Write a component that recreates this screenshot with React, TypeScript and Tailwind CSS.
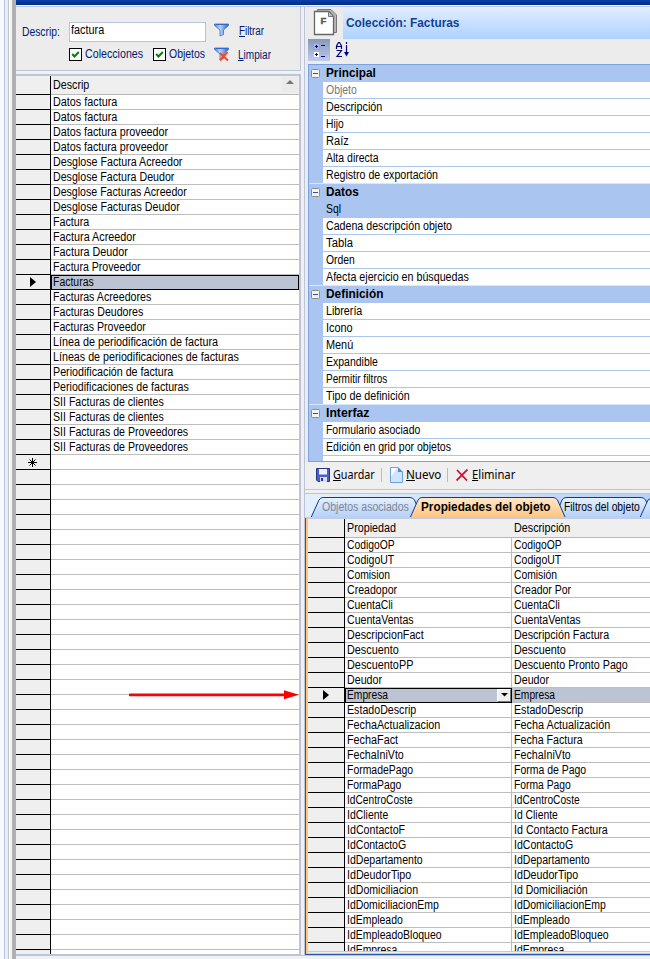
import { useLayoutEffect, useRef, useState } from "react";
import type { ReactNode } from "react";

type Pair = [string, number];

/* A label condensed horizontally so that it takes exactly `w` pixels. */
function Label({ w, children, className = "" }: { w: number; children: ReactNode; className?: string }) {
  const ref = useRef<HTMLSpanElement>(null);
  const [scale, setScale] = useState(1);
  useLayoutEffect(() => {
    if (ref.current) setScale(w / ref.current.offsetWidth);
  }, [w]);
  return (
    <span className={`block shrink-0 whitespace-nowrap ${className}`} style={{ width: w }}>
      <span ref={ref} className="inline-block origin-left" style={{ transform: `scaleX(${scale})` }}>
        {children}
      </span>
    </span>
  );
}

const collections: Pair[] = [
  ["Datos factura", 64],
  ["Datos factura", 64],
  ["Datos factura proveedor", 115],
  ["Datos factura proveedor", 115],
  ["Desglose Factura Acreedor", 129],
  ["Desglose Factura Deudor", 121],
  ["Desglose Facturas Acreedor", 134],
  ["Desglose Facturas Deudor", 127],
  ["Factura", 36],
  ["Factura Acreedor", 83],
  ["Factura Deudor", 75],
  ["Factura Proveedor", 88],
  ["Facturas", 41],
  ["Facturas Acreedores", 98],
  ["Facturas Deudores", 90],
  ["Facturas Proveedor", 93],
  ["Línea de periodificación de factura", 165],
  ["Líneas de periodificaciones de facturas", 186],
  ["Periodificación de factura", 120],
  ["Periodificaciones de facturas", 136],
  ["SII Facturas de clientes", 111],
  ["SII Facturas de clientes", 111],
  ["SII Facturas de Proveedores", 135],
  ["SII Facturas de Proveedores", 135],
];
const SELECTED_COLLECTION = 12;

const groups: { title: Pair; items: Pair[] }[] = [
  {
    title: ["Principal", 50],
    items: [["Objeto", 31], ["Descripción", 56], ["Hijo", 18], ["Raíz", 23], ["Alta directa", 53], ["Registro de exportación", 112]],
  },
  {
    title: ["Datos", 33],
    items: [["Sql", 15], ["Cadena descripción objeto", 126], ["Tabla", 27], ["Orden", 29], ["Afecta ejercicio en búsquedas", 143]],
  },
  {
    title: ["Definición", 57],
    items: [["Librería", 36], ["Icono", 27], ["Menú", 27], ["Expandible", 52], ["Permitir filtros", 61], ["Tipo de definición", 84]],
  },
  { title: ["Interfaz", 43], items: [["Formulario asociado", 94], ["Edición en grid por objetos", 125]] },
];

const properties: [string, number, string, number][] = [
  ["CodigoOP", 48, "CodigoOP", 48],
  ["CodigoUT", 47, "CodigoUT", 47],
  ["Comision", 43, "Comisión", 43],
  ["Creadopor", 50, "Creador Por", 57],
  ["CuentaCli", 46, "CuentaCli", 46],
  ["CuentaVentas", 67, "CuentaVentas", 67],
  ["DescripcionFact", 77, "Descripción Factura", 95],
  ["Descuento", 52, "Descuento", 52],
  ["DescuentoPP", 66, "Descuento Pronto Pago", 114],
  ["Deudor", 35, "Deudor", 35],
  ["Empresa", 41, "Empresa", 41],
  ["EstadoDescrip", 69, "EstadoDescrip", 69],
  ["FechaActualizacion", 93, "Fecha Actualización", 96],
  ["FechaFact", 51, "Fecha Factura", 69],
  ["FechaIniVto", 57, "FechaIniVto", 57],
  ["FormadePago", 66, "Forma de Pago", 72],
  ["FormaPago", 54, "Forma Pago", 57],
  ["IdCentroCoste", 66, "IdCentroCoste", 66],
  ["IdCliente", 41, "Id Cliente", 44],
  ["IdContactoF", 58, "Id Contacto Factura", 94],
  ["IdContactoG", 59, "IdContactoG", 59],
  ["IdDepartamento", 76, "IdDepartamento", 76],
  ["IdDeudorTipo", 64, "IdDeudorTipo", 64],
  ["IdDomiciliacion", 71, "Id Domiciliación", 74],
  ["IdDomiciliacionEmp", 92, "IdDomiciliacionEmp", 92],
  ["IdEmpleado", 56, "IdEmpleado", 56],
  ["IdEmpleadoBloqueo", 95, "IdEmpleadoBloqueo", 95],
  ["IdEmpresa", 50, "IdEmpresa", 50],
];
const SELECTED_PROPERTY = 10;

function Funnel({ clear = false }: { clear?: boolean }) {
  return (
    <svg width="16" height="15" viewBox="0 0 16 15" className="block shrink-0">
      <defs>
        <linearGradient id="funnel" x1="0" x2="1">
          <stop offset="0" stopColor="#4c80e0" />
          <stop offset=".4" stopColor="#b9d6fb" />
          <stop offset="1" stopColor="#2a5ccc" />
        </linearGradient>
      </defs>
      <path d="M.5 1H14.500V2.500L9.500 7V11.500L6 13V7L.5 2.500Z" fill="url(#funnel)" stroke="#3c6fd6" strokeWidth=".8" />
      <path d="M1.500 1.500H13.500" stroke="#3468d0" />
      {clear && <path d="M6 6L14 13.500M13.500 5L6 13.500" stroke="#f04a28" strokeWidth="2" />}
    </svg>
  );
}

function Check({ w, children }: { w: number; children: string }) {
  return (
    <div className="flex items-center gap-[3px]">
      <svg width="13" height="13" viewBox="0 0 13 13" className="block">
        <rect x=".5" y=".5" width="12" height="12" fill="#fff" stroke="#000" />
        <path d="M3.200 6L5.500 8.500L9.800 4" fill="none" stroke="#008000" strokeWidth="2" />
      </svg>
      <Label w={w}>{children}</Label>
    </div>
  );
}

function SearchPanel() {
  return (
    <div className="flex h-[64px] w-[285px] flex-col border-r border-b border-[#bcc4d8] bg-[#ececec] pl-[6px] text-[#001a72]">
      <div className="mt-[15px] flex h-[20px] items-center">
        <Label w={38}>Descrip:</Label>
        <div className="ml-[9px] flex h-[20px] w-[137px] items-start border border-[#b9c2d8] bg-white pl-px leading-[14px] text-black">
          <Label w={33}>factura</Label>
        </div>
        <div className="mb-[3px] ml-[8px]"><Funnel /></div>
        <Label w={25} className="mb-[2px] ml-[9px]"><u>F</u>iltrar</Label>
      </div>
      <div className="mt-[3px] flex h-[18px] items-center pl-[47px]">
        <Check w={58}>Colecciones</Check>
        <div className="ml-[10px]"><Check w={36}>Objetos</Check></div>
        <div className="ml-[9px]"><Funnel clear /></div>
        <Label w={33} className="mt-[2px] ml-[8px]"><u>L</u>impiar</Label>
      </div>
    </div>
  );
}

function RowArrow() {
  return (
    <svg width="6" height="10" viewBox="0 0 6 10" className="block">
      <path d="M0 0L6 5L0 10Z" fill="#000" />
    </svg>
  );
}

function CollectionGrid() {
  return (
    <div className="mt-[3px] flex h-[882px] w-[285px] flex-col overflow-hidden border-t-2 border-r-2 border-b border-[#bcc4d8] bg-white">
      <div className="flex h-[19px] shrink-0">
        <div className="w-[35px] border-r border-b border-black bg-[#efefef]" />
        <div className="flex flex-1 items-center justify-between border-b border-[#b8b8b8] bg-[#efefef] pl-[2px]">
          <Label w={36}>Descrip</Label>
          <div className="mr-px flex h-4 w-4 items-start justify-center bg-[#ebebeb] pt-[3px]">
            <svg width="8" height="4" viewBox="0 0 8 4" className="block"><path d="M4 0L8 4H0Z" fill="#777" /></svg>
          </div>
        </div>
      </div>
      {Array.from({ length: 58 }, (_, i) => {
        const row = collections[i];
        const selected = i === SELECTED_COLLECTION;
        return (
          <div key={i} className="flex h-[15px] shrink-0">
            <div className="flex w-[35px] items-center justify-center border-r border-b border-black bg-[#efefef]">
              {selected && <RowArrow />}
              {i === collections.length && (
                <svg width="9" height="9" viewBox="0 0 9 9" className="mt-px mr-[2px] block">
                  <path d="M4.500 0V9M0 4.500H9M1.500 1.500L7.500 7.500M7.500 1.500L1.500 7.500" stroke="#000" />
                </svg>
              )}
            </div>
            <div
              className={
                selected
                  ? "flex flex-1 items-center bg-[#bcc4d4] pb-px pl-[2px] outline outline-1 -outline-offset-1 outline-black"
                  : "flex flex-1 items-center border-b border-[#bdbdbd] pl-[2px]"
              }
            >
              {row && <Label w={row[1]}>{row[0]}</Label>}
            </div>
          </div>
        );
      })}
    </div>
  );
}

function HeaderBar() {
  return (
    <div className="flex h-[32px] shrink-0">
      <svg width="38" height="32" viewBox="0 0 38 32" className="block shrink-0">
        <path d="M12.500 2.500H26L31.500 8V25.500H12.500Z" fill="#b8b8b8" stroke="#777" />
        <path d="M9.500 4.500H24L28.500 9.500V27.500H9.500Z" fill="#fff" stroke="#666" strokeWidth="1.300" />
        <path d="M23.500 4.500V9.500H28.500Z" fill="#c4c4c4" stroke="#777" />
        <text x="15.500" y="17" fontFamily="Liberation Sans" fontWeight="700" fontSize="9.500" fill="#555" stroke="#555" strokeWidth=".4">F</text>
      </svg>
      <div className="mt-px flex flex-1 items-center bg-linear-to-b from-[#dfedff] to-[#aed2ff] pb-px pl-[3px] text-[12.500px] font-bold text-[#123f94]">
        <Label w={113}>Colección: Facturas</Label>
      </div>
    </div>
  );
}

function ViewButtons() {
  return (
    <div className="flex h-[25px] shrink-0 items-start gap-[5px] pl-[3px]">
      <svg width="22" height="22" viewBox="0 0 22 22" className="block" shapeRendering="crispEdges">
        <defs>
          <linearGradient id="pressed" y1="0" y2="1" x2="0">
            <stop offset="0" stopColor="#8797bd" />
            <stop offset="1" stopColor="#c0ccea" />
          </linearGradient>
        </defs>
        <rect width="22" height="22" fill="url(#pressed)" />
        <rect x="5.500" y="4.500" width="6" height="6" fill="#a9b8dc" stroke="#8fa2d0" />
        <rect x="6" y="13" width="5" height="5" fill="#fff" />
        <path d="M7 7.500H10M8.500 6V9M7 15.500H10M8.500 14V17M13 6.500H17M13 17.500H17" stroke="#000080" />
        <path d="M13 8.500H19M13 10.500H19M13 12.500H19M13 14.500H19" stroke="#9fb0dc" strokeDasharray="3 1" />
      </svg>
      <svg width="16" height="20" viewBox="0 0 16 20" className="block">
        <g fill="none" stroke="#000080" strokeWidth="1.200">
          <path d="M1.500 10V7L3.500 3.500H4.500L6.500 7V10M1.500 7.500H6.500" />
          <path d="M1.500 11.500H6.500L2 17.500H7" />
          <path d="M11.500 3V5M11.500 6V14" />
        </g>
        <path d="M9 13H14L11.500 17.500Z" fill="#000080" />
      </svg>
    </div>
  );
}

function PropertyGrid() {
  return (
    <div className="ml-[3px] flex h-[398px] shrink-0 flex-col border-t border-b border-l border-[#7ba2e0] bg-white">
      {groups.map((g, gi) => (
        <div key={g.title[0]} className="flex flex-col">
          <div className="flex h-[17px] items-center bg-[#a9c5f0] pb-px font-bold text-black">
            <svg width="9" height="9" viewBox="0 0 9 9" className="mt-px ml-[2px] block">
              <rect x=".5" y=".5" width="8" height="8" rx="1" fill="#f4f4f0" stroke="#8c8c84" />
              <path d="M2 4.500H7" stroke="#2c50b0" />
            </svg>
            <Label w={g.title[1]} className="ml-[6px]">{g.title[0]}</Label>
          </div>
          {g.items.map((it, i) => {
            const last = i === g.items.length - 1 && gi < groups.length - 1;
            return (
              <div key={it[0]} className="flex h-[17px]">
                <div className={`w-[14px] bg-[#a9c5f0] ${last ? "border-b border-[#d8e6fa]" : ""}`} />
                <div
                  className={`flex flex-1 items-center border-b pl-[3px] ${last ? "border-[#d8e6fa]" : "border-[#a9c5f0]"} ${
                    it[0] === "Sql" ? "bg-[#a9c5f0]" : ""
                  } ${it[0] === "Objeto" ? "text-[#777]" : ""}`}
                >
                  <Label w={it[1]}>{it[0]}</Label>
                </div>
              </div>
            );
          })}
        </div>
      ))}
      <div className="h-[5px] w-[14px] bg-[#a9c5f0]" />
    </div>
  );
}

function ActionBar() {
  return (
    <div className="flex h-[27px] shrink-0 items-center bg-[#efefef] pl-[11px] pb-px font-['Noto_Sans',sans-serif] text-[12px]">
      <svg width="14" height="14" viewBox="0 0 14 14" className="block">
        <path d="M.5 .5H13.500V13.500H2L.5 12Z" fill="#4a5ec4" stroke="#28358c" />
        <rect x="3" y="1" width="8" height="5.500" fill="#eef2ff" />
        <rect x="4" y="9" width="7" height="5" fill="#d8dcf0" />
        <rect x="5" y="10" width="2" height="3" fill="#28358c" />
      </svg>
      <Label w={42} className="ml-[3px]"><u>G</u>uardar</Label>
      <div className="ml-[6px] h-[14px] w-px bg-[#bbb]" />
      <svg width="13" height="16" viewBox="0 0 13 16" className="ml-[8px] block">
        <path d="M.5 .5H8L12.500 5V15.500H.5Z" fill="#cfe3fb" stroke="#6ea0dc" />
        <path d="M8 .5V5H12.500Z" fill="#4c88d8" />
        <path d="M1 1H7L1 10Z" fill="#fff" />
      </svg>
      <Label w={35} className="ml-[3px]"><u>N</u>uevo</Label>
      <div className="ml-[6px] h-[14px] w-px bg-[#bbb]" />
      <svg width="12" height="12" viewBox="0 0 12 12" className="ml-[8px] block">
        <path d="M1 1L11 11.500M11.500 .5L.5 11.500" stroke="#d01030" strokeWidth="1.800" />
      </svg>
      <Label w={43} className="ml-[4px]"><u>E</u>liminar</Label>
    </div>
  );
}

function TabStrip() {
  return (
    <div className="relative flex h-[24px] shrink-0 items-center bg-linear-to-r from-[#e4effd] to-[#b6d0f8] pt-[2px]">
      <svg width="345" height="24" viewBox="305 494 345 24" className="absolute top-0 left-0 block">
        <defs>
          <linearGradient id="tab" y1="0" y2="1" x2="0">
            <stop offset="0" stopColor="#e6f0fe" />
            <stop offset="1" stopColor="#b4d0f8" />
          </linearGradient>
          <linearGradient id="active" y1="0" y2="1" x2="0">
            <stop offset="0" stopColor="#ffe9cc" />
            <stop offset="1" stopColor="#ffc47c" />
          </linearGradient>
        </defs>
        <g stroke="#0a3c94">
          <path d="M311 517.500L319 500Q320.500 497.500 323 497.500H410Q413 497.500 414.500 500L422 517.500Z" fill="url(#tab)" />
          <path d="M555 517.500L562 500Q563.500 497.500 566 497.500H641Q644 497.500 645.500 500L654 517.500Z" fill="url(#tab)" />
          <path d="M640 517.500L648 500L652 497.500V517.500Z" fill="url(#tab)" />
          <path d="M410 518L418 500Q419.500 497.500 422 497.500H553Q556 497.500 557.500 500L565.500 518Z" fill="url(#active)" />
        </g>
        <path d="M305 517.500H650" stroke="#ffc47c" />
      </svg>
      <Label w={87} className="relative ml-[17px] text-[#7c8698]">Objetos asociados</Label>
      <Label w={130} className="relative ml-[12px] font-bold">Propiedades del objeto</Label>
      <Label w={76} className="relative ml-[13px]">Filtros del objeto</Label>
    </div>
  );
}

function ObjectProperties() {
  return (
    <div className="flex h-[437px] shrink-0 flex-col border-b border-l border-[#2d57a0]">
      <div className="flex flex-1 flex-col overflow-hidden border-b border-l-2 border-[#ffc47c]">
        <div className="flex h-[434px] flex-col overflow-hidden border-t border-b border-[#c3cbe0] bg-white">
          <div className="flex h-[19px] shrink-0 bg-[#efefef]">
            <div className="w-[37px] border-r border-b border-black" />
            <div className="flex w-[167px] items-center border-b border-[#b8b8b8] pl-[2px]"><Label w={49}>Propiedad</Label></div>
            <div className="flex flex-1 items-center border-b border-[#b8b8b8] pl-[2px]"><Label w={56}>Descripción</Label></div>
          </div>
          {properties.map(([name, nw, desc, dw], i) => {
            const selected = i === SELECTED_PROPERTY;
            return (
              <div key={name} className="flex h-[15px] shrink-0">
                <div className="flex w-[37px] items-center justify-center border-r border-b border-black bg-[#efefef]">
                  {selected && <RowArrow />}
                </div>
                <div
                  className={
                    selected
                      ? "flex w-[167px] items-center justify-between bg-[#bcc4d4] pb-px pl-[2px] outline outline-1 -outline-offset-1 outline-black"
                      : "flex w-[167px] items-center border-r border-b border-[#bdbdbd] pl-[2px]"
                  }
                >
                  <Label w={nw}>{name}</Label>
                  {selected && (
                    <div className="relative mr-px flex h-[13px] w-[14px] items-center justify-center border border-t-white border-r-[#777] border-b-[#777] border-l-white bg-[#f0f0f0]">
                      <svg width="7" height="4" viewBox="0 0 7 4" className="block"><path d="M0 0H7L3.500 3.500Z" fill="#000" /></svg>
                    </div>
                  )}
                </div>
                <div className={`flex flex-1 items-center border-b border-[#bdbdbd] pl-[2px] ${selected ? "bg-[#bcc4d4]" : ""}`}>
                  <Label w={dw}>{desc}</Label>
                </div>
              </div>
            );
          })}
        </div>
      </div>
    </div>
  );
}

export default function App() {
  return (
    <div className="relative flex h-[959px] w-[650px] overflow-hidden bg-[#f0f0f0] font-['Liberation_Sans',Arial,sans-serif] text-[12.500px] leading-[14px] text-black">
      <div className="flex w-[16px] shrink-0">
        <div className="w-[4px] bg-[#f8faff]" />
        <div className="w-px bg-[#bcc4d8]" />
        <div className="w-[3px] bg-[#ececf0]" />
        <div className="w-px bg-[#bcc4d8]" />
        <div className="w-px bg-white" />
        <div className="w-[2px] bg-[#f4f4f0]" />
        <div className="w-[4px] bg-[#b0b0b0]" />
      </div>
      <div className="flex w-[634px] flex-col">
        <div className="h-[5px] shrink-0 bg-linear-to-b from-[#0c40a4] to-[#002c8c]" />
        <div className="h-px shrink-0 bg-[#f4f6fc]" />
        <div className="h-px shrink-0 bg-[#bcc4d8]" />
        <div className="flex h-[948px] shrink-0">
          <div className="flex flex-col">
            <SearchPanel />
            <CollectionGrid />
          </div>
          <div className="ml-[3px] flex w-[346px] flex-col border-l border-[#bcc4d8] bg-[#ececec]">
            <HeaderBar />
            <ViewButtons />
            <PropertyGrid />
            <ActionBar />
            <div className="h-[5px] shrink-0 border-t border-b border-[#bcc4d8] bg-[#f0f0f0]" />
            <TabStrip />
            <ObjectProperties />
          </div>
        </div>
        <div className="h-px bg-[#bcc4d8]" />
        <div className="flex-1 bg-[#f0f1f5]" />
      </div>
      <svg width="171" height="10" viewBox="0 0 171 10" className="absolute top-[690px] left-[129px]">
        <path d="M1 4.800H156" stroke="#f00" strokeWidth="2.800" strokeLinecap="round" />
        <path d="M155 .3L170 4.800L155 9.300Z" fill="#f00" />
      </svg>
    </div>
  );
}
